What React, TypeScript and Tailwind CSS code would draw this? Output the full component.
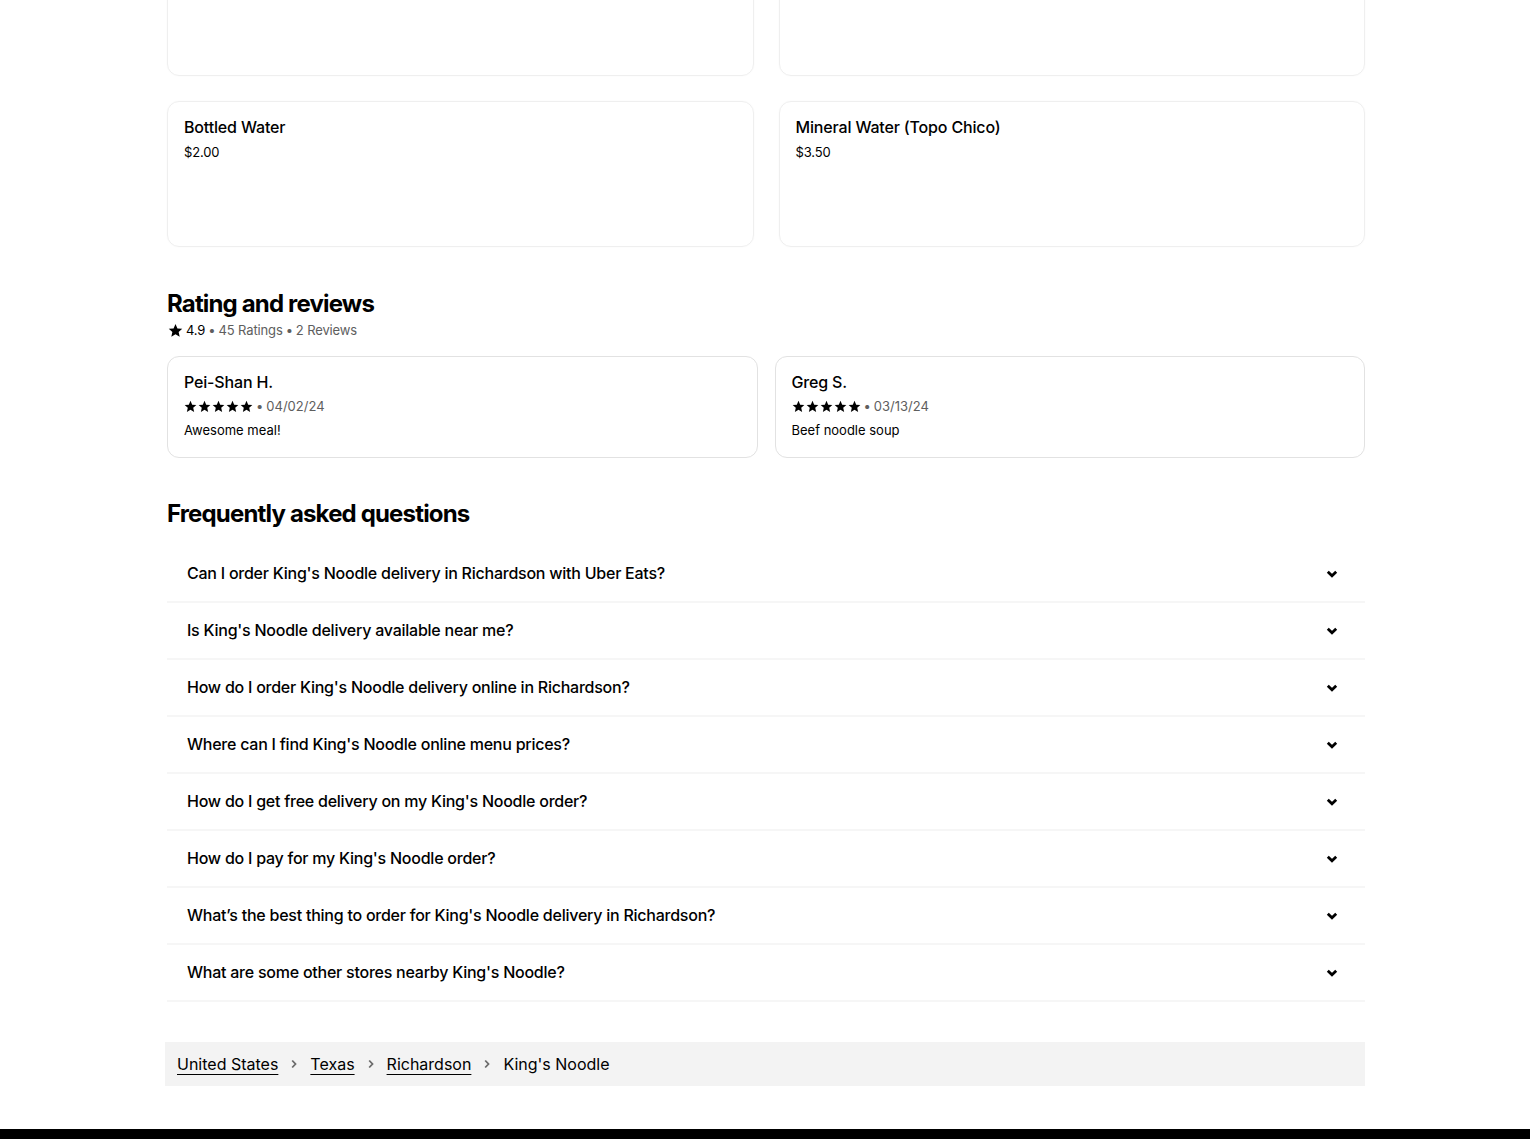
const items = [
  [null, null],
  [
    { name: "Bottled Water", price: "$2.00" },
    { name: "Mineral Water (Topo Chico)", price: "$3.50" },
  ],
];

const reviews = [
  { name: "Pei-Shan H.", date: "04/02/24", text: "Awesome meal!" },
  { name: "Greg S.", date: "03/13/24", text: "Beef noodle soup" },
];

const faqs = [
  "Can I order King's Noodle delivery in Richardson with Uber Eats?",
  "Is King's Noodle delivery available near me?",
  "How do I order King's Noodle delivery online in Richardson?",
  "Where can I find King's Noodle online menu prices?",
  "How do I get free delivery on my King's Noodle order?",
  "How do I pay for my King's Noodle order?",
  "What\u2019s the best thing to order for King's Noodle delivery in Richardson?",
  "What are some other stores nearby King's Noodle?",
];

function Star({ className = "size-3" }: { className?: string }) {
  return (
    <svg viewBox="0 0 24 24" className={className} fill="currentColor" aria-hidden>
      <path d="M12 1.5l3.1 7.1 7.7.7-5.8 5.1 1.7 7.6L12 18l-6.7 4 1.7-7.6-5.8-5.1 7.7-.7z" />
    </svg>
  );
}

function Chevron() {
  return (
    <svg viewBox="0 0 12 8" className="h-2 w-3" fill="none" aria-hidden>
      <path d="M1.8 1.8L6 5.8l4.2-4" stroke="black" strokeWidth="2.8" />
    </svg>
  );
}

function Crumb() {
  return (
    <svg viewBox="0 0 6 10" className="h-2.5 w-1.5" fill="none" aria-hidden>
      <path d="M1.2 1.5L4.5 5 1.2 8.5" stroke="#6b6b6b" strokeWidth="1.8" />
    </svg>
  );
}

export default function App() {
  return (
    <div
      className="min-h-[1139px] overflow-hidden bg-white text-black"
      style={{ fontFamily: "Inter, Roboto, 'Liberation Sans', sans-serif" }}
    >
      <div className="mx-auto w-[1200px]">
        <div className="-mt-[70px] flex flex-col gap-[25px] pl-[2px]">
          {items.map((row, i) => (
            <div key={i} className="grid grid-cols-2 gap-[25px]">
              {row.map((item, j) => (
                <div
                  key={j}
                  className="h-[146px] rounded-xl border border-[#efefef] px-4 py-4 shadow-[0_0_2px_rgba(0,0,0,0.03)]"
                >
                  {item && (
                    <>
                      <p className="-mt-px text-base leading-5 font-medium tracking-[-0.01em]">{item.name}</p>
                      <p className="mt-[5px] text-[13px] leading-5 tracking-[-0.01em]">{item.price}</p>
                    </>
                  )}
                </div>
              ))}
            </div>
          ))}
        </div>

        <h2 className="mt-[41px] pl-[2px] text-2xl leading-8 font-bold tracking-[-0.035em]">
          Rating and reviews
        </h2>
        <div className="flex items-center gap-[3px] pl-[3px] text-[13px] leading-5 tracking-[-0.01em] text-[#5e5e5e]">
          <Star className="size-[15px] text-black" />
          <span className="text-black">4.9</span>
          <span>•</span>
          <span>45 Ratings</span>
          <span>•</span>
          <span>2 Reviews</span>
        </div>

        <div className="mt-4 grid grid-cols-2 gap-[17px] pl-[2px]">
          {reviews.map((r) => (
            <div
              key={r.name}
              className="flex flex-col gap-1 rounded-xl border border-[#e2e2e2] px-4 pt-[15px] pb-[17px]"
            >
              <p className="text-base leading-5 font-medium tracking-[-0.01em]">{r.name}</p>
              <div className="flex items-center gap-[3px] text-[13px] leading-5 text-[#5e5e5e]">
                <span className="flex gap-[1px] text-black">
                  {[0, 1, 2, 3, 4].map((s) => (
                    <Star key={s} className="size-[13px]" />
                  ))}
                </span>
                <span>•</span>
                <span>{r.date}</span>
              </div>
              <p className="text-[13px] leading-5">{r.text}</p>
            </div>
          ))}
        </div>

        <h2 className="mt-10 pl-[2px] text-2xl leading-8 font-bold tracking-[-0.035em]">
          Frequently asked questions
        </h2>
        <div className="mt-4 pl-[2px]">
          {faqs.map((q) => (
            <div
              key={q}
              className="flex h-[57px] items-center justify-between border-b-2 border-[#f6f6f6] pr-[27px] pl-5"
            >
              <span className="-mt-px text-base font-medium tracking-[-0.015em]">{q}</span>
              <Chevron />
            </div>
          ))}
        </div>

        <nav className="mt-10 flex h-[44px] items-center gap-[13px] bg-[#f3f3f3] px-3 text-base">
          {["United States", "Texas", "Richardson"].map((c) => (
            <span key={c} className="flex items-center gap-[13px]">
              <a className="underline decoration-1 underline-offset-4">{c}</a>
              <Crumb />
            </span>
          ))}
          <span>King's Noodle</span>
        </nav>
      </div>
      <div className="mt-[43px] h-[40px] bg-black" />
    </div>
  );
}
